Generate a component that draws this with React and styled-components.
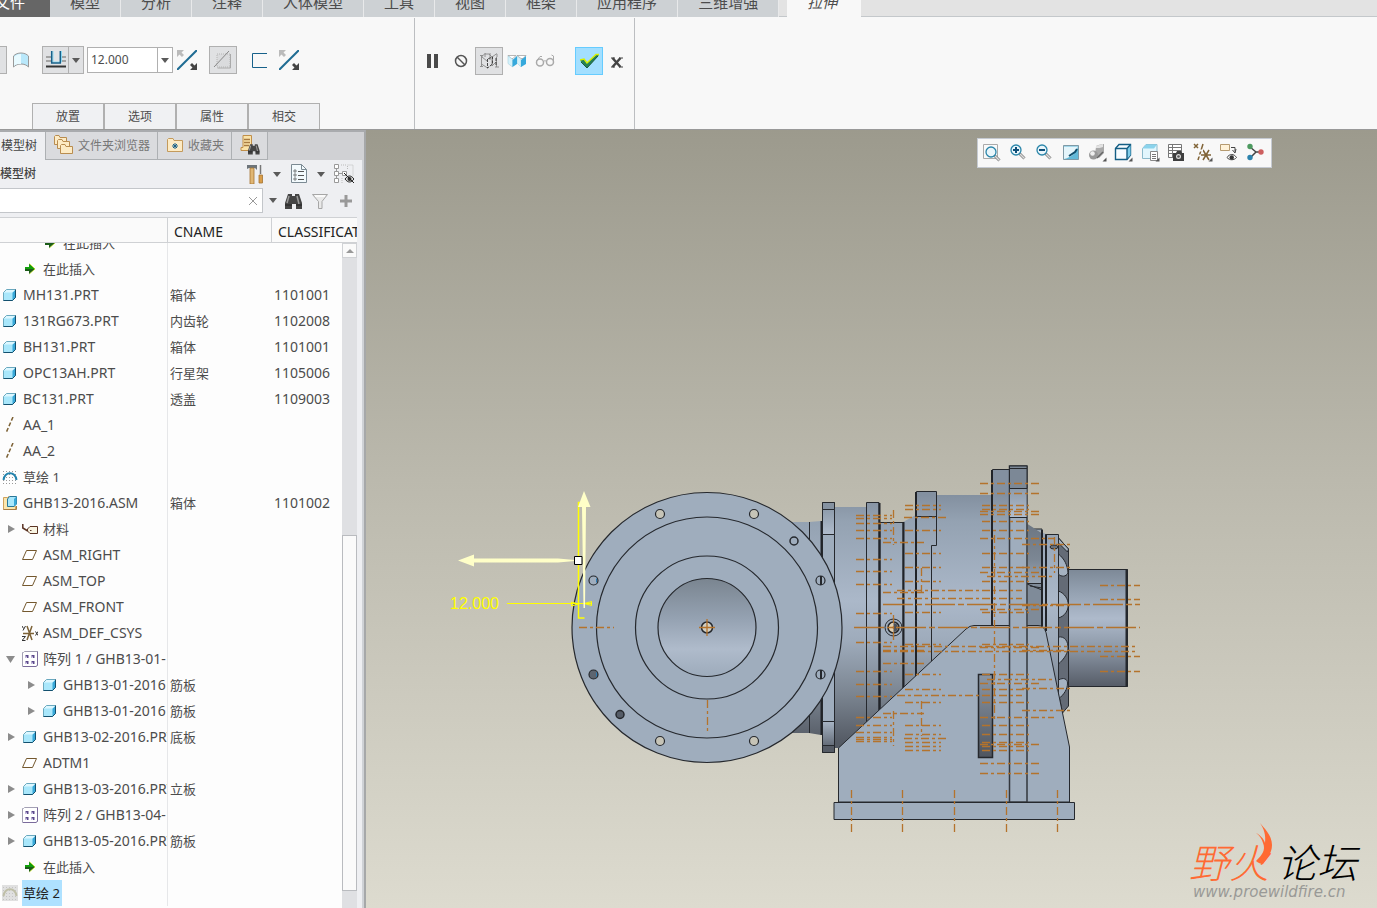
import React, { useLayoutEffect, useRef } from "react";
import styled, { createGlobalStyle, css } from "styled-components";

const GlobalStyle = createGlobalStyle`
  * {
    box-sizing: border-box;
  }
  body {
    margin: 0;
    font-family: "Noto Sans", "Noto Sans CJK SC", sans-serif;
    font-size: 12px;
    color: #4c4c4c;
    background: #f8f8f8;
  }
  button {
    font: inherit;
    color: inherit;
    padding: 0;
    border: 0;
    background: none;
  }
  svg {
    display: block;
    flex: none;
  }
`;

const ribbonTabs = [
  "模型",
  "分析",
  "注释",
  "人体模型",
  "工具",
  "视图",
  "框架",
  "应用程序",
  "三维增强",
];

const treeRows = [
  { depth: 2, icon: "insert", name: "在此插入" },
  { depth: 1, icon: "insert", name: "在此插入" },
  { depth: 0, icon: "part", name: "MH131.PRT", cname: "箱体", code: "1101001" },
  { depth: 0, icon: "part", name: "131RG673.PRT", cname: "内齿轮", code: "1102008" },
  { depth: 0, icon: "part", name: "BH131.PRT", cname: "箱体", code: "1101001" },
  { depth: 0, icon: "part", name: "OPC13AH.PRT", cname: "行星架", code: "1105006" },
  { depth: 0, icon: "part", name: "BC131.PRT", cname: "透盖", code: "1109003" },
  { depth: 0, icon: "axis", name: "AA_1" },
  { depth: 0, icon: "axis", name: "AA_2" },
  { depth: 0, icon: "sketch", name: "草绘 1" },
  { depth: 0, icon: "asm", name: "GHB13-2016.ASM", cname: "箱体", code: "1101002" },
  { depth: 1, icon: "material", name: "材料", arrow: "closed" },
  { depth: 1, icon: "plane", name: "ASM_RIGHT" },
  { depth: 1, icon: "plane", name: "ASM_TOP" },
  { depth: 1, icon: "plane", name: "ASM_FRONT" },
  { depth: 1, icon: "csys", name: "ASM_DEF_CSYS" },
  { depth: 1, icon: "pattern", name: "阵列 1 / GHB13-01-", arrow: "open" },
  { depth: 2, icon: "part", name: "GHB13-01-2016", cname: "筋板", arrow: "closed" },
  { depth: 2, icon: "part", name: "GHB13-01-2016", cname: "筋板", arrow: "closed" },
  { depth: 1, icon: "part", name: "GHB13-02-2016.PRT", cname: "底板", arrow: "closed" },
  { depth: 1, icon: "plane", name: "ADTM1" },
  { depth: 1, icon: "part", name: "GHB13-03-2016.PRT", cname: "立板", arrow: "closed" },
  { depth: 1, icon: "pattern", name: "阵列 2 / GHB13-04-", arrow: "closed" },
  { depth: 1, icon: "part", name: "GHB13-05-2016.PRT", cname: "筋板", arrow: "closed" },
  { depth: 1, icon: "insert", name: "在此插入" },
  { depth: 0, icon: "sketchOff", name: "草绘 2", selected: true },
];

/* ---------- icons ---------- */

const Icon = ({ size = 20, children }) => (
  <svg width={size} height={size} viewBox={`0 0 ${size} ${size}`} fill="none" aria-hidden="true">
    {children}
  </svg>
);

const Caret = () => (
  <svg width="8" height="5" viewBox="0 0 8 5" aria-hidden="true">
    <path d="M0 0h8L4 5z" fill="#5a5a5a" />
  </svg>
);

const SketchDots = ({ color }) => (
  <path
    d="M1 2.500h14M1 5.500h14M1 8.500h14M1 11.500h14M1 14.500h14"
    stroke={color}
    strokeDasharray="1 2"
  />
);

const rowIcons = {
  part: (
    <Icon size={16}>
      <path d="M1.500 5.500 4.500 2.500h9v7.500l-3 3.500h-9z" fill="#a9e7fb" />
      <path d="M10.500 5.500l3-3v8l-3 3z" fill="#38a8d8" />
      <path d="M1.500 5.500l3-3h9l-3 3z" fill="#dcf7ff" />
      <path d="M1.500 13.500V5.500l3-3h9v8l-3 3z" stroke="#6aa9bf" />
      <path d="M1.500 13.500h9l3-3v-8" stroke="#13506e" />
    </Icon>
  ),
  asm: (
    <Icon size={16}>
      <path d="M1.500 2.500h4l1-1v10h7v3h-12z" fill="#fbe6ae" stroke="#cfa25c" />
      <path d="M5.500 4l2-2.500h7V9l-2.500 2.500H5.500z" fill="#a9e7fb" stroke="#2a7697" />
      <path d="M12 4l2.500-2.500V9L12 11.500z" fill="#38a8d8" />
      <path d="M14.500 11v3.500h-13" stroke="#a87b42" />
    </Icon>
  ),
  axis: (
    <Icon size={16}>
      <path d="M11 0 4 16" stroke="#7d6236" strokeWidth="1.500" strokeDasharray="4 2" />
    </Icon>
  ),
  sketch: (
    <Icon size={16}>
      <SketchDots color="#999" />
      <path d="M1.500 11C3 2 13 2 14.500 11" stroke="#2283ad" strokeWidth="2" />
    </Icon>
  ),
  sketchOff: (
    <Icon size={16}>
      <path d="M0 0h16v16H0z" fill="#e0e0e0" />
      <SketchDots color="#c4c4c4" />
      <path d="M1.500 11C3 2 13 2 14.500 11" stroke="#bfbfa8" strokeWidth="2" />
    </Icon>
  ),
  insert: (
    <Icon size={16}>
      <path d="M3 6h4V3l6 5-6 5v-3H3z" fill="#1b5c18" />
      <path d="M3 6h4V3l6 5H3z" fill="#12a00c" />
      <path d="M7.500 2.500 13 8l-5.500 5" stroke="#c8e000" strokeWidth=".6" />
    </Icon>
  ),
  material: (
    <Icon size={16}>
      <path d="M5.500 8 8 5.500h7.500v7H8L5.500 10z" fill="#f8f4e2" stroke="#5b3424" />
      <path d="M.8 3v4l5 3" stroke="#5b3424" strokeWidth="1.500" />
      <path d="M8 9.500h1.500" stroke="#5b3424" />
    </Icon>
  ),
  plane: (
    <Icon size={16}>
      <path d="M4.500 3.500h10l-4 9h-10z" fill="#fff" stroke="#74582e" />
    </Icon>
  ),
  csys: (
    <Icon size={16}>
      <path d="M1 8.500h11M5 1l5 14M10 1 5 15" stroke="#7d6236" strokeWidth="1.500" />
      <path d="M0 1l1.500 2.500M3.500 1 1 5.500M0 11.500h3.500L0 15.500h3.500M13.500 6.500l2.500 4M16 6.500l-2.500 4" stroke="#333" />
    </Icon>
  ),
  pattern: (
    <Icon size={16}>
      <path d="M.5 1.500h1l1-1h13v14l-1 1H.5z" fill="#fff" stroke="#a3a0b4" />
      <path d="M15.500.5V14l-1.500 1.500H1" stroke="#7b6b9c" />
      <path d="M3.500 4h3v3h-3zM9.500 4h3v3h-3zM3.500 10h3v3h-3zM9.500 10h3v3h-3z" fill="#5c4a8c" />
      <path d="M3.500 5.500h1.500V7H3.500zM9.500 5.500H11V7H9.500zM3.500 11.500h1.500V13H3.500zM9.500 11.500H11V13H9.500z" fill="#d9d0f0" />
    </Icon>
  ),
};

const SurfaceIcon = () => (
  <Icon size={18}>
    <path d="M1.500 5C5 1 13 1 16.500 5v11C13 12 5 12 1.500 16z" fill="#b9e8fb" stroke="#999" />
    <path d="M2 6C4 4 6 3 9 3v10c-3 0-5 0-7 2z" fill="#e8faff" />
  </Icon>
);

const DepthIcon = () => (
  <Icon>
    <path d="M0 7h20M0 11h20" stroke="#a3a3a3" strokeWidth="2" />
    <path d="M5 0h10v13H5z" fill="#e3e4e6" />
    <path d="M7 1v11h8.500V1" stroke="#8fdcf3" />
    <path d="M5.700 1v12h8.600V1" stroke="#17618a" strokeWidth="1.500" />
    <path d="M0 16.500h20" stroke="#333" strokeWidth="2" />
  </Icon>
);

const FlipIcon = () => (
  <Icon>
    <path d="M0 20 20 0" stroke="#1f6c93" strokeWidth="2" />
    <path d="M0 0h7L4.500 2.500 7 5 5 7 2.500 4.500 0 7z" fill="#bbb" />
    <path d="M20 20h-7l2.500-2.500L13 15l2-2 2.500 2.500L20 13z" fill="#444" />
  </Icon>
);

const RemoveMaterialIcon = () => (
  <Icon>
    <path d="M4 4h13v13H4z" fill="#dadbdd" stroke="#b5b5b5" strokeDasharray="1 1" />
    <path d="M17.500 4v14H4.500" stroke="#aaa" />
    <path d="M1 17 16 1" stroke="#888" />
  </Icon>
);

const ThickenIcon = () => (
  <Icon>
    <path d="M18 3.500H3.500v14H18" stroke="#17618a" />
  </Icon>
);

const PauseIcon = () => (
  <Icon>
    <path d="M4 3h4v14H4zM11 3h4v14h-4z" fill="#4a4a4a" />
  </Icon>
);

const NoneIcon = () => (
  <Icon>
    <circle cx="10" cy="10" r="5.500" stroke="#555" strokeWidth="1.500" />
    <path d="m6 6 8 8" stroke="#555" strokeWidth="1.500" />
  </Icon>
);

const WireIcon = () => (
  <Icon>
    <path
      d="M1 4.500h3M1 15.500h3M2.500 5v10M2.500 6 6 2.500M6 3h4l3 3 5-3.500M6 2v4M11 2v7M18 3v3M2.500 13l6 4M13 6v9M13 15l4-4M17.500 6v10M16 16h4M3 6l5 4"
      stroke="#888"
      strokeWidth=".9"
    />
    <path d="M8.500 8v9l5-4V6zM17 7v7" stroke="#333" strokeWidth=".9" strokeDasharray="3 1" />
  </Icon>
);

const AttachedIcon = () => (
  <Icon>
    <path d="M1 4.500h8l-3 3H4zM10 4.500h9l-3 3h-2z" fill="#fff" stroke="#999" strokeWidth=".7" />
    <path d="M1 5 5.500 8v8L1 12.500zM10 5l4 3v8l-4-4z" fill="#d5f2fb" stroke="#9bc9d8" strokeWidth=".5" />
    <path d="M5.500 9 10 5v8l-4.500 3zM14 9l5-4v8l-5 3z" fill="#36a9dc" />
  </Icon>
);

const GlassesIcon = () => (
  <Icon>
    <circle cx="5" cy="11.500" r="3.500" stroke="#aaa" strokeWidth="1.500" />
    <circle cx="15" cy="11" r="3.500" stroke="#aaa" strokeWidth="1.500" />
    <path d="M8.500 10.500c1-1 2-1 3 0M1.500 10 5 5.500h2M18.500 11V5l-2-1" stroke="#aaa" />
  </Icon>
);

const CheckIcon = () => (
  <Icon>
    <path d="M1 9.500 5 8l3 4 9-8h3L8 17z" fill="#258256" />
    <path d="m1 9 4-1 3 4 9-8.500h3" stroke="#d8f000" strokeWidth="1.500" />
    <path d="m2 11 6 6L19 5" stroke="#1c5c3c" />
  </Icon>
);

const CloseIcon = () => (
  <Icon>
    <path d="m5.500 7 8 9M13.500 7l-8 9" stroke="#444" strokeWidth="2.500" />
    <path d="M4 7h4M12 7h4M4 16h4M12 16h4" stroke="#444" />
  </Icon>
);

const FoldersIcon = () => (
  <Icon>
    {[
      [0, 0],
      [3, 4],
      [6, 9],
    ].map(([x, y]) => (
      <path
        key={y}
        transform={`translate(${x} ${y})`}
        d="M.5 9.500v-8l1-1H5l1 2h6.500v7z"
        fill="#fdebc4"
        stroke="#b98d50"
      />
    ))}
  </Icon>
);

const FavoriteIcon = () => (
  <Icon size={18}>
    <path d="M1.500 15.500v-12l1-1H7l1 2h8.500v11z" fill="#fdebc4" stroke="#c39a5c" />
    <path d="M9 7v6M6 10h6M7 8l4 4M11 8l-4 4" stroke="#17618a" />
  </Icon>
);

const Binoculars = ({ x = 0, y = 0, scale = 1 }) => (
  <g transform={`translate(${x} ${y}) scale(${scale})`}>
    <path d="M3 2h4v2h3V2h4l3 9v6h-6v-5H7v5H0v-6z" fill="#454545" />
    <path d="M4 4 2 11M12 4l2 8" stroke="#9a9a9a" strokeWidth="1.500" />
    <path d="M0 13h7M11 13h6" stroke="#222" />
  </g>
);

const SearchTabIcon = () => (
  <Icon>
    <path d="M3 .5h8.500v15H1v-3h2z" fill="#fbe3a8" stroke="#c08f4a" />
    <path d="M4 4.500h6M4 7.500h6M4 10.500h5" stroke="#a87b42" strokeWidth="1.500" />
    <Binoculars x={8} y={8} scale={0.68} />
  </Icon>
);

const ToolsIcon = () => (
  <Icon>
    <path d="M2 1h10v5l-2-2H4L2 5z" fill="#6d747a" />
    <path d="M5 4h4v16H5z" fill="#e0b674" stroke="#a47433" strokeWidth=".8" />
    <path d="M15.500 1v9" stroke="#777" strokeWidth="1.500" />
    <path d="M14 11h3.500v8H14z" fill="#d99d48" stroke="#a47433" strokeWidth=".8" />
  </Icon>
);

const SettingsDocIcon = () => (
  <Icon>
    <path d="M2.500.5h10l5 5v13h-15z" fill="#f3fafd" stroke="#7b8a93" />
    <path d="M12.500.5v5h5" stroke="#7b8a93" />
    <path d="M5 6h2v2H5zM5 10h2v2H5zM5 14h2v2H5z" stroke="#555" strokeWidth=".7" />
    <path d="M9 7.500h6M9 11.500h6M9 15.500h6" stroke="#555" />
  </Icon>
);

const HideTreeIcon = () => (
  <Icon>
    <path d="M.5.5h4v4h-4zM.5 7.500h4v4h-4zM.5 14.500h4v4h-4zM8.500 7.500h4v4h-4z" fill="#fff" stroke="#999" />
    <path d="M2.500 4.500v3M2.500 11.500v3M4.500 9.500h4" stroke="#999" />
    <path d="M7 1h5M13.500 1h5.500v11M13.500 2v4M8 14v5" stroke="#bbb" strokeDasharray="1 1" />
    <path d="M11 15c3-4 6-4 9 0-3 4-6 4-9 0z" fill="#ddd" stroke="#222" />
    <circle cx="15.500" cy="15" r="2" fill="#333" />
    <path d="m10 9 10 10" stroke="#222" />
  </Icon>
);

const BinocularsIcon = () => (
  <Icon size={18}>
    <Binoculars />
  </Icon>
);

const FunnelIcon = () => (
  <Icon size={18}>
    <path d="M1.500 2.500h15L11 9.500v7H7.500v-7z" fill="#e9e9e9" stroke="#a6a6a6" />
    <path d="M4 4h10" stroke="#fff" strokeWidth="1.500" />
  </Icon>
);

const PlusIcon = () => (
  <Icon size={18}>
    <path d="M9 3v12M3 9h12" stroke="#999" strokeWidth="3" />
  </Icon>
);

const Magnifier = ({ x = 0, y = 0, sign }) => (
  <g transform={`translate(${x} ${y})`}>
    <path d="m10.500 10.500 5 5" stroke="#888" strokeWidth="3" />
    <path d="m11 11 4.500 4.500" stroke="#ddd" strokeWidth="1.200" />
    <circle cx="7" cy="7" r="5" fill="#eaf6fb" stroke="#2b86aa" strokeWidth="1.300" />
    {sign && <path d={sign} stroke="#0f4f78" strokeWidth="2" />}
  </g>
);

const Flyout = () => <path d="M19.500 15.500v4h-4z" fill="#555" />;

const viewIcons = [
  {
    label: "重新调整",
    art: (
      <>
        <path d="M2.500 2.500h14v14h-14z" fill="#fafafa" stroke="#aaa" />
        <Magnifier x={3} y={3} />
      </>
    ),
  },
  { label: "放大", art: <Magnifier x={1} y={1} sign="M4 7h6M7 4v6" /> },
  { label: "缩小", art: <Magnifier x={1} y={1} sign="M4 7h6" /> },
  {
    label: "重画",
    art: (
      <>
        <path d="M2.500 3.500h15v14h-15z" fill="#62b9d8" stroke="#7f9aa6" />
        <path d="M3 4.500h14C15 11 11 15 3 17z" fill="#e4f5fb" />
        <path d="m8 14 6-4 2-3" stroke="#114f6d" strokeWidth="2" />
      </>
    ),
  },
  {
    label: "显示样式",
    art: (
      <>
        <path d="M9 5c0-2 3-2 8-3v9l-5 5-4-4z" fill="#a9a9a9" />
        <path d="M9 4c2-1 5-1 7-2v3c-2 1-5 1-7 1z" fill="#e2e2e2" />
        <circle cx="6.500" cy="13" r="4.500" fill="#999" />
        <circle cx="5.500" cy="11.500" r="2.300" fill="#efefef" />
        <path d="m10 16 6-6" stroke="#666" strokeWidth="1.500" />
        <Flyout />
      </>
    ),
  },
  {
    label: "已保存方向",
    art: (
      <>
        <path d="M2.500 6.500 6 2.500h11.500V13L14 17.500H2.500z" fill="#f7fcff" stroke="#145e84" strokeWidth="1.400" />
        <path d="M14 6.500 17.500 3v10L14 17z" fill="#7fcdea" />
        <path d="M2.500 6.500H14v11M14 6.500l3.500-4" stroke="#145e84" strokeWidth="1.400" />
        <Flyout />
      </>
    ),
  },
  {
    label: "视图管理器",
    art: (
      <>
        <path d="M2.500 6.500 6 2.500h11v9l-3 5H2.500z" fill="#e2f6fd" stroke="#8cbacb" />
        <path d="M2.500 6.500 6 2.500h11l-3 4z" fill="#8ad3ec" />
        <path d="M10.500 9.500h7v9h-7z" fill="#fff" stroke="#888" />
        <path d="M12 12.500h4M12 14.500h4M12 16.500h4" stroke="#777" />
        <Flyout />
      </>
    ),
  },
  {
    label: "图像",
    art: (
      <>
        <path d="M2.500 2.500h13v13h-13z" fill="#fff" stroke="#777" />
        <path d="M2.500 5.500h13M2.500 8.500h13M2.500 11.500h13M6.500 2.500v13" stroke="#777" />
        <path d="M7 11h3l1-2h4l1 2h2v8H7z" fill="#3e3e3e" />
        <circle cx="12.500" cy="14.500" r="2.500" fill="#ddd" />
        <circle cx="12.500" cy="14.500" r="1.300" fill="#555" />
      </>
    ),
  },
  {
    label: "基准显示",
    art: (
      <>
        <path d="m1 2 4 4M5 2 1 6M10 2 5 18" stroke="#806336" strokeWidth="1.500" />
        <path d="M8 13h10M10 8l6 10M16 8l-6 10" stroke="#806336" strokeWidth="1.500" />
        <path d="M6 8.500h4M5 13.500h3" stroke="#f8f8f8" strokeWidth="2" />
        <Flyout />
      </>
    ),
  },
  {
    label: "注释显示",
    art: (
      <>
        <path d="M1.500 2.500h9v6h-9z" fill="#fff2d8" stroke="#b59a70" />
        <path d="M12 5.500h4v4M13.500 8l2.500 3 1-4" stroke="#444" />
        <path d="M8 15.500c2.500-4 7-4 9.500 0-2.500 3-7 3-9.500 0z" fill="#fff" stroke="#444" />
        <circle cx="12.700" cy="15.500" r="2.200" fill="#333" />
      </>
    ),
  },
  {
    label: "旋转中心",
    art: (
      <>
        <path d="m4 5 6 5M4 16l6-6h6" stroke="#444" strokeWidth="1.500" />
        <circle cx="4" cy="4.500" r="2.700" fill="#4d9a60" />
        <circle cx="4" cy="15.500" r="2.700" fill="#2c83ad" />
        <circle cx="15" cy="10" r="2.700" fill="#cd5f5f" />
      </>
    ),
  },
];

/* ---------- model drawing ---------- */

// horizontal centre lines: [x1, x2, [y...]]
const centreRows = [
  [856, 892, [515, 518, 523, 530, 538, 559, 571, 584, 613, 642, 671, 684, 696, 717, 725, 732, 737, 739, 741]],
  [905, 941, [505, 509, 530, 553, 567, 581, 612, 644, 674, 689, 702, 725, 734, 742, 746, 750]],
  [904, 948, [517, 738]],
  [982, 1029, [505, 509, 521, 530, 553, 567, 581, 612, 644, 674, 689, 702, 725, 734, 742, 746, 750]],
  [980, 1039, [483, 493, 511, 514, 572, 609, 647, 683, 744, 763, 773]],
  [980, 1054, [538, 717]],
  [987, 1054, [576, 679]],
  [897, 1022, [590, 598, 695]],
  [883, 1138, [646, 651]],
  [883, 924, [542, 592, 650, 663, 713]],
  [1022, 1071, [544, 567, 605, 650, 688, 710]],
  [1100, 1140, [585, 599, 656, 671]],
];

// vertical centre lines: [x, y1, y2]
const centreColumns = [
  [893, 510, 545],
  [893, 615, 640],
  [893, 711, 746],
  [921, 568, 592],
  [921, 701, 736],
  [994, 535, 720],
  [1054, 537, 573],
  [851, 790, 832],
  [902, 790, 832],
  [954, 790, 832],
  [1006, 790, 832],
  [1057, 790, 832],
  [707, 700, 734],
];

const openHoles = [
  [660, 514],
  [754, 514],
  [660, 741],
  [754, 741],
];

const ModelDrawing = () => (
  <Canvas viewBox="366 130 1011 778" role="img" aria-label="GHB13-2016">
    <defs>
      <linearGradient id="barrel" gradientUnits="userSpaceOnUse" x1="0" y1="495" x2="0" y2="760">
        <stop offset="0" stopColor="#8390a0" />
        <stop offset="0.1" stopColor="#94a2b2" />
        <stop offset="0.4" stopColor="#abb8c9" />
        <stop offset="0.55" stopColor="#9eabbb" />
        <stop offset="0.75" stopColor="#7b8591" />
        <stop offset="0.93" stopColor="#555b65" />
        <stop offset="1" stopColor="#50565f" />
      </linearGradient>
      <linearGradient id="shaft" x1="0" y1="0" x2="0" y2="1">
        <stop offset="0" stopColor="#7d8997" />
        <stop offset="0.2" stopColor="#95a2b2" />
        <stop offset="0.42" stopColor="#aebacb" />
        <stop offset="0.65" stopColor="#8f9baa" />
        <stop offset="1" stopColor="#565c67" />
      </linearGradient>
      <linearGradient id="bore" x1="0" y1="0" x2="0" y2="1">
        <stop offset="0" stopColor="#7a8590" />
        <stop offset="0.4" stopColor="#94a1b1" />
        <stop offset="0.72" stopColor="#afbbcb" />
        <stop offset="1" stopColor="#9dabbb" />
      </linearGradient>
      <linearGradient id="cap" x1="0" y1="0" x2="0" y2="1">
        <stop offset="0" stopColor="#8e9cac" />
        <stop offset="1" stopColor="#b0bccc" />
      </linearGradient>
      <linearGradient id="capLow" x1="0" y1="0" x2="0" y2="1">
        <stop offset="0" stopColor="#a8b5c5" />
        <stop offset="1" stopColor="#646c78" />
      </linearGradient>
      <linearGradient id="slot" x1="0" y1="0" x2="0" y2="1">
        <stop offset="0" stopColor="#8a96a5" />
        <stop offset="1" stopColor="#4f555f" />
      </linearGradient>
      <linearGradient id="step" x1="0" y1="0" x2="0" y2="1">
        <stop offset="0" stopColor="#6c7682" />
        <stop offset="0.6" stopColor="#7c8794" />
        <stop offset="1" stopColor="#99a6b5" />
      </linearGradient>
    </defs>

    {/* gearbox barrel, left to right */}
    <g fill="url(#barrel)" stroke="#25282d">
      <path d="M790 522h19l12-1v214l-12-2h-19z" stroke="none" />
      <path d="M809.500 522v211" />
      <path d="M834.500 507h32v241h-32z" stroke="none" />
      <path d="M866.500 502.500h12.500V752h-12.500z" />
      <path d="M880 522.500h23V752h-23z" />
      <path d="M903 522l13-7v237h-13z" stroke="none" />
      <path d="M930 495h62v257h-62z" stroke="none" />
      <path d="M916.500 491.500h20v54h-5V752h-15z" />
      <path d="M916.500 516.500h20" />
      <path d="M992.500 469.500h17V752h-17z" />
      <path d="M1034 529h8v110h4V534" />
      <path d="M1027.500 524l14 9v50h-14z" fill="url(#step)" stroke="none" />
      <path d="M1027.500 584h14v50h-14z" fill="#7f8b99" stroke="none" />
      <path d="M1027 583.500h15M1027 584l15 6M1030 586l12 2" />
      <path d="M1045.500 534.500h13V690h-13z" />
      <path d="M1058.500 538l10 11v157l-6 7-4-20z" fill="#646b76" />
    </g>
    <g stroke="#202328" strokeWidth="2" fill="none">
      <path d="M821.500 521v214M879.500 503v245M903.500 522v180M916 492v195M992 470v156M1042 530v96M1046 535v96" />
    </g>
    <path d="M1058.500 538l10 11-1 3-9-9z" fill="#a3b0bf" stroke="#25282d" />
    <g fill="#a5b2c1" stroke="#25282d">
      <path d="M1058.500 554c6 5 9 11 9.500 19-2 4-7 4-9.500 1z" />
      <path d="M1058.500 591c13 5 13 23 0 27z" />
      <path d="M1058.500 637c6-1 10 4 9.500 12-1 6-5 11-9.500 15z" />
      <path d="M1058.500 680c5-3 9-1 9 3 0 6-3 11-9 16z" />
    </g>
    <ellipse cx="1054" cy="547" rx="4" ry="2" fill="#69717d" stroke="#25282d" />
    <path d="M1068.500 569.500h59v117h-59z" fill="url(#shaft)" stroke="#25282d" />
    <path d="M1126.500 569v118" stroke="#25282d" strokeWidth="2" />

    {/* front flange rim */}
    <g stroke="#25282d">
      <path d="M822.500 502.500h12v250h-12z" fill="#9fadbd" />
      <path d="M822.500 502.500h12v7h-12z" fill="#8592a1" />
      <path d="M822.500 509.500h12v25h-12z" fill="url(#cap)" />
      <path d="M822.500 721.500h12v24h-12z" fill="url(#capLow)" />
      <path d="M822.500 745.500h12v7h-12z" fill="#555b65" />
    </g>

    {/* support bracket */}
    <path
      d="M838.500 802v-54L966 629q4-3.500 8-3.500h64q6 0 8 7L1069.500 747v55z"
      fill="#9fadbd"
      stroke="#25282d"
    />
    <path d="M978.500 674.500h14v83h-14z" fill="url(#slot)" stroke="#25282d" strokeWidth="1.500" />
    <path d="M1009.500 466h17.500v336h-17.500z" fill="#9fadbd" stroke="#33373d" strokeWidth="1.500" />
    <path d="M1009.500 466h17.500v22.500h-17.500z" fill="#7c8896" stroke="#25282d" />
    <path d="M1010 489h16.500v28H1010z" fill="url(#cap)" />
    <path d="M1009 468.500h18M1009 517.500h18" stroke="#25282d" />
    <path d="M834 802.500h240.500v17H834z" fill="#9fadbd" stroke="#25282d" />

    {/* oil port */}
    <circle cx="893.500" cy="627.500" r="8.500" fill="#9fadbd" stroke="#25282d" />
    <circle cx="893.500" cy="627.500" r="5.500" fill="#e3cfae" stroke="#25282d" strokeWidth="1.500" />
    <path d="M893.500 623a4.500 4.500 0 0 1 0 9z" fill="#4c525c" />

    {/* input flange */}
    <g fill="#9fadbd" stroke="#25282d" strokeWidth="1.200">
      <circle cx="707" cy="627.500" r="135" />
      <circle cx="707" cy="627.500" r="110.500" />
      <circle cx="707" cy="627.500" r="71.500" />
      <circle cx="707" cy="627.500" r="49" fill="url(#bore)" />
      <circle cx="794" cy="541" r="4" strokeWidth="1.500" />
      <circle cx="620" cy="714.500" r="4" fill="#555c67" strokeWidth="1.500" />
      <circle cx="593.500" cy="580.500" r="4.500" />
      <circle cx="593.500" cy="674.500" r="4.500" fill="#5d6570" />
      <circle cx="820.500" cy="580.500" r="4.500" />
      <circle cx="820.500" cy="674.500" r="4.500" />
      <path d="M821 576v9M821 670v9" strokeWidth="2" />
    </g>
    <path d="M596.500 578.500v4M596.500 672.500v4" stroke="#2b7cb5" />
    {openHoles.map(([x, y]) => (
      <circle key={`${x}-${y}`} cx={x} cy={y} r="4.500" fill="#c6c4b7" stroke="#25282d" strokeWidth="1.200" />
    ))}
    <circle cx="707" cy="627.500" r="5.500" fill="#d0cec2" stroke="#25282d" strokeWidth="1.500" />

    {/* centre lines */}
    <g stroke="#b4732c" strokeWidth="1.300" strokeDasharray="8 3 3 3">
      {centreRows.map(([x1, x2, ys]) =>
        ys.map((y) => <path key={`${x1}-${x2}-${y}`} d={`M${x1} ${y}.5H${x2}`} />)
      )}
      {centreColumns.map(([x, y1, y2]) => (
        <path key={`${x}-${y1}`} d={`M${x}.5 ${y1}V${y2}`} />
      ))}
      <path d="M579 627.500h35" />
      <path d="M883 604.500h257M854 627.500h286" strokeDasharray="30 3 6 3" />
      <path d="M699 627.500h16M707 619v17" strokeDasharray="none" />
    </g>

    {/* extrude preview and drag handles */}
    <g stroke="#ffff00" fill="none">
      <path d="M584 502.500h-5.500V618h6" strokeWidth="1.500" />
      <path d="M507 603.500h84M571.500 602v4l7-2zM591.500 601.500v4l-7-2z" />
    </g>
    <g fill="#ffffc8">
      <path d="M458 560.500 474 554.500v4h84l17 1.500v1l-17 1.500h-84v4z" />
      <path d="M584 491l6.500 16H586l-1 101h-1.500L582 507h-4z" />
    </g>
    <path d="M574.500 556.500h7.500v8h-7.500z" fill="#fff" stroke="#000" />
    <DimensionText x="450" y="609">
      12.000
    </DimensionText>
  </Canvas>
);

/* ---------- page ---------- */

const ModelTree = () => {
  const scroller = useRef(null);

  useLayoutEffect(() => {
    scroller.current.scrollTop = 13;
  }, []);

  return (
    <TreeFrame>
      <TreeScroll ref={scroller}>
        <TreeTable>
          <colgroup>
            <col width="168" />
            <col width="104" />
            <col />
          </colgroup>
          <thead>
            <tr>
              <th aria-label="模型树" />
              <th>CNAME</th>
              <th>CLASSIFICATION</th>
            </tr>
          </thead>
          <tbody>
            {treeRows.map((row, index) => (
              <tr key={index}>
                <td>
                  <Node $depth={row.depth}>
                    {row.depth > 0 && (
                      <Expander>
                        {row.arrow && (
                          <svg width="10" height="10" viewBox="0 0 10 10" aria-hidden="true">
                            <path d={row.arrow === "open" ? "M0 2h9L4.500 9z" : "M2 1l7 4-7 4z"} fill="#8c8c8c" />
                          </svg>
                        )}
                      </Expander>
                    )}
                    {rowIcons[row.icon]}
                    <NodeName $cjk={/^[\u4e00-\u9fff]+( \d)?$/.test(row.name)} $selected={row.selected}>
                      {row.name}
                    </NodeName>
                  </Node>
                </td>
                <td>{row.cname}</td>
                <td>{row.code}</td>
              </tr>
            ))}
          </tbody>
        </TreeTable>
      </TreeScroll>
      <ScrollBar aria-hidden="true">
        <ScrollUp>
          <svg width="8" height="4" viewBox="0 0 8 4">
            <path d="M0 4h8L4 0z" fill="#999" />
          </svg>
        </ScrollUp>
        <ScrollGap $grow={278} />
        <ScrollThumb />
        <ScrollGap $grow={17} />
      </ScrollBar>
    </TreeFrame>
  );
};

const App = () => {
  return (
    <>
      <GlobalStyle />
      <Page>
        <RibbonTabs>
          <RibbonTab $kind="file">文件</RibbonTab>
          {ribbonTabs.map((name) => (
            <RibbonTab key={name}>{name}</RibbonTab>
          ))}
          <RibbonTab $kind="active">拉伸</RibbonTab>
        </RibbonTabs>

        <Ribbon>
          <RibbonGroup $width={415} $toolsHeight={84}>
            <Tools $gap={12}>
              <Tools $gap={5}>
                <CutButton aria-label="实体" />
                <ToolButton $width={18} aria-label="曲面">
                  <SurfaceIcon />
                </ToolButton>
              </Tools>
              <Tools $gap={3}>
                <SplitButton>
                  <ToolButton $width={26} aria-label="深度">
                    <DepthIcon />
                  </ToolButton>
                  <CaretButton aria-label="深度选项">
                    <Caret />
                  </CaretButton>
                </SplitButton>
                <ValueBox>
                  <input aria-label="深度值" defaultValue="12.000" />
                  <CaretButton aria-label="最近的值">
                    <Caret />
                  </CaretButton>
                </ValueBox>
                <ToolButton $width={21} aria-label="反向">
                  <FlipIcon />
                </ToolButton>
              </Tools>
              <ToolButton $pressed aria-label="移除材料">
                <RemoveMaterialIcon />
              </ToolButton>
              <Tools $gap={9}>
                <ToolButton $width={20} aria-label="加厚草绘">
                  <ThickenIcon />
                </ToolButton>
                <ToolButton $width={21} aria-label="材料方向">
                  <FlipIcon />
                </ToolButton>
              </Tools>
            </Tools>
            <PanelTabs>
              <button>放置</button>
              <button>选项</button>
              <button>属性</button>
              <button>相交</button>
            </PanelTabs>
          </RibbonGroup>

          <RibbonGroup $width={220} $toolsHeight={86}>
            <Tools $gap={16} $inset>
              <Tools $gap={0}>
                <ToolButton aria-label="暂停">
                  <PauseIcon />
                </ToolButton>
                <ToolButton aria-label="无预览">
                  <NoneIcon />
                </ToolButton>
                <ToolButton $pressed aria-label="分离">
                  <WireIcon />
                </ToolButton>
                <ToolButton aria-label="连接">
                  <AttachedIcon />
                </ToolButton>
                <ToolButton aria-label="特征预览">
                  <GlassesIcon />
                </ToolButton>
              </Tools>
              <Tools $gap={0}>
                <ToolButton $accept aria-label="确定">
                  <CheckIcon />
                </ToolButton>
                <ToolButton aria-label="取消">
                  <CloseIcon />
                </ToolButton>
              </Tools>
            </Tools>
          </RibbonGroup>
        </Ribbon>

        <Workspace>
          <Sidebar>
            <SideTabs>
              <SideTab $active>模型树</SideTab>
              <SideTab>
                <FoldersIcon />
                文件夹浏览器
              </SideTab>
              <SideTab>
                <FavoriteIcon />
                收藏夹
              </SideTab>
              <SideTab aria-label="搜索">
                <SearchTabIcon />
              </SideTab>
            </SideTabs>

            <SideBody>
              <TitleRow>
                <strong>模型树</strong>
                <button aria-label="设置">
                  <ToolsIcon />
                </button>
                <button aria-label="设置选项">
                  <Caret />
                </button>
                <button aria-label="显示">
                  <SettingsDocIcon />
                </button>
                <button aria-label="显示选项">
                  <Caret />
                </button>
                <button aria-label="隐藏树列">
                  <HideTreeIcon />
                </button>
              </TitleRow>
              <SearchRow>
                <SearchBox>
                  <input aria-label="搜索模型树" />
                  <button aria-label="清除">
                    <Icon size={10}>
                      <path d="m1 1 8 8M9 1 1 9" stroke="#999" />
                    </Icon>
                  </button>
                </SearchBox>
                <button aria-label="搜索选项">
                  <Caret />
                </button>
                <button aria-label="查找">
                  <BinocularsIcon />
                </button>
                <button aria-label="过滤">
                  <FunnelIcon />
                </button>
                <button aria-label="添加">
                  <PlusIcon />
                </button>
              </SearchRow>
              <ModelTree />
            </SideBody>
          </Sidebar>

          <Viewport>
            <ModelDrawing />
            <ViewToolbar>
              {viewIcons.map(({ label, art }) => (
                <button key={label} aria-label={label}>
                  <Icon>{art}</Icon>
                </button>
              ))}
            </ViewToolbar>
            <Watermark>
              <WatermarkTitle>
                <span>野火</span>
                <span>论坛</span>
              </WatermarkTitle>
              <WatermarkUrl>www.proewildfire.cn</WatermarkUrl>
              <Flame viewBox="0 0 18 42" aria-hidden="true">
                <path
                  d="M5 0c4 5 12 12 12 22 0 9-6 14-9 19-2 0-5-1-7-3 6-6 10-11 7-18C7 16 4 12 1 10c4 2 8 6 9 10 1-8-1-14-5-20z"
                  fill="#ff6a33"
                />
              </Flame>
            </Watermark>
          </Viewport>
        </Workspace>
      </Page>
    </>
  );
};

const Page = styled.div`
  display: flex;
  flex-direction: column;
  height: 100vh;
  overflow: hidden;
`;

const RibbonTabs = styled.nav`
  display: flex;
  flex: none;
  align-items: flex-end;
  height: 17px;
  overflow: hidden;
  background: #e3e3e3;
  box-shadow: inset 0 -1px #c4c8cb;
`;

const RibbonTab = styled.button`
  flex: none;
  height: 28px;
  padding: 0 20px 1px;
  border-right: 1px solid #e8e9ea;
  background: #cdd1d4;
  font-size: 15px;
  line-height: 27px;
  ${({ $kind }) =>
    $kind === "file" &&
    css`
      display: flex;
      justify-content: flex-end;
      width: 50px;
      padding: 0 25px 1px 0;
      border: 0;
      background: #666;
      color: #fff;
      white-space: nowrap;
    `}
  ${({ $kind }) =>
    $kind === "active" &&
    css`
      margin-left: 8px;
      padding: 0 24px 1px 20px;
      border: 0;
      background: #f8f8f8;
      font-style: italic;
    `}
`;

const Ribbon = styled.header`
  display: flex;
  flex: none;
  height: 113px;
  border-bottom: 1px solid #999;
  background: #f8f8f8;
`;

const RibbonGroup = styled.div`
  display: flex;
  flex-direction: column;
  justify-content: space-between;
  min-width: ${({ $width }) => $width}px;
  margin-top: 1px;
  border-right: 1px solid #bcbec1;
  > div:first-child {
    height: ${({ $toolsHeight }) => $toolsHeight}px;
  }
`;

const Tools = styled.div`
  display: flex;
  align-items: center;
  gap: ${({ $gap }) => $gap}px;
  padding-left: ${({ $inset }) => ($inset ? "4px" : 0)};
`;

const ToolButton = styled.button`
  display: flex;
  align-items: center;
  justify-content: center;
  width: ${({ $width = 28 }) => $width}px;
  height: 28px;
  ${({ $pressed }) =>
    $pressed &&
    css`
      border: 1px solid #b0b0b0;
      background: #e0e1e3;
    `}
  ${({ $accept }) =>
    $accept &&
    css`
      border: 1px solid #66ccff;
      background: #a3dfff;
    `}
`;

const CutButton = styled.button`
  width: 7px;
  height: 28px;
  border: 1px solid #b0b0b0;
  border-left: 0;
  background: #e0e1e3;
`;

const CaretButton = styled.button`
  display: flex;
  align-items: center;
  justify-content: center;
  align-self: stretch;
  width: 15px;
  border-left: 1px solid #b0b0b0;
`;

const SplitButton = styled.div`
  display: flex;
  align-items: center;
  width: 42px;
  height: 28px;
  border: 1px solid #b0b0b0;
  background: #e0e1e3;
`;

const ValueBox = styled.div`
  display: flex;
  width: 86px;
  height: 26px;
  border: 1px solid #b0b0b0;
  background: #fff;
  input {
    flex: 1;
    min-width: 0;
    padding: 0 3px 2px;
    border: 0;
    background: none;
    color: #4c4c4c;
    font-family: inherit;
    font-size: 12px;
  }
`;

const PanelTabs = styled.div`
  display: flex;
  height: 26px;
  padding-left: 32px;
  button {
    width: 72px;
    padding-bottom: 1px;
    border: 1px solid #b0b0b0;
    border-bottom: 0;
    background: #f0f1f3;
    font-size: 12px;
  }
`;

const Workspace = styled.main`
  display: flex;
  flex: 1;
  min-height: 0;
`;

const Sidebar = styled.aside`
  display: flex;
  flex-direction: column;
  flex: none;
  width: 366px;
  border-top: 2px solid #a9abae;
  border-right: 2px solid #a6a8a9;
  background: #d0d1d4;
`;

const SideTabs = styled.div`
  display: flex;
  height: 28px;
`;

const SideTab = styled.button`
  display: flex;
  align-items: center;
  gap: 4px;
  padding: 0 7px 2px 8px;
  border: 1px solid #adb0b3;
  border-left: 0;
  border-top: 0;
  background: #dadbde;
  color: #777;
  font-size: 12px;
  white-space: nowrap;
  ${({ $active }) =>
    $active &&
    css`
      padding: 0 8px 3px 1px;
      border-bottom: 0;
      background: #eeeff2;
      color: #444;
    `}
`;

const SideBody = styled.div`
  display: flex;
  flex-direction: column;
  flex: 1;
  min-height: 0;
  padding-right: 5px;
  border-right: 2px solid #cfd2d6;
  background: #eeeff2;
`;

const TitleRow = styled.div`
  display: flex;
  align-items: center;
  gap: 8px;
  height: 28px;
  padding-right: 3px;
  strong {
    flex: 1;
    padding-bottom: 2px;
    color: #444;
    font-weight: 500;
  }
  button:nth-of-type(1),
  button:nth-of-type(5) {
    margin-left: 1px;
  }
`;

const SearchRow = styled.div`
  display: flex;
  align-items: center;
  gap: 8px;
  height: 25px;
  padding-right: 2px;
  > button:first-of-type {
    margin-left: -2px;
  }
`;

const SearchBox = styled.div`
  display: flex;
  flex: 1;
  align-items: center;
  height: 25px;
  padding-right: 4px;
  border: 1px solid #c3c6ca;
  border-left: 0;
  background: #fff;
  input {
    flex: 1;
    min-width: 0;
    border: 0;
    background: none;
  }
`;

const TreeFrame = styled.div`
  position: relative;
  flex: 1;
  min-height: 0;
  margin-top: 4px;
`;

const TreeScroll = styled.div`
  height: 100%;
  overflow: hidden;
  background: #fdfdfd;
`;

const TreeTable = styled.table`
  width: 100%;
  margin-bottom: 8px;
  border-collapse: separate;
  border-spacing: 0;
  table-layout: fixed;
  font-size: 14px;
  th,
  td {
    padding: 0;
    overflow: hidden;
    text-align: left;
    white-space: nowrap;
  }
  th {
    position: sticky;
    top: 0;
    height: 26px;
    padding: 4px 0 0 6px;
    border: 1px solid #cfd1d4;
    border-left: 0;
    background: #fafafa;
    color: #222;
    font-weight: 400;
    line-height: 20px;
  }
  th:last-child {
    border-right: 0;
  }
  td {
    height: 26px;
    padding-left: 2px;
    line-height: 26px;
  }
  td:first-child {
    padding-left: 0;
    border-right: 1px solid #e6e7e9;
  }
  td:nth-child(2) {
    font-size: 13px;
    line-height: 24px;
  }
`;

const Node = styled.div`
  display: flex;
  align-items: center;
  gap: 4px;
  height: 26px;
  padding-left: ${({ $depth }) => ($depth > 1 ? 22 : 2)}px;
`;

const Expander = styled.span`
  display: flex;
  flex: none;
  width: 16px;
  padding-left: 4px;
`;

const NodeName = styled.span`
  flex: none;
  padding: 0 2px 0 1px;
  font-size: ${({ $cjk }) => ($cjk ? "13px" : "14px")};
  ${({ $selected }) =>
    $selected &&
    css`
      background: #aee1ff;
      color: #222;
    `}
`;

const ScrollBar = styled.div`
  position: absolute;
  top: 26px;
  right: 0;
  bottom: 0;
  display: flex;
  flex-direction: column;
  width: 15px;
  background: #dfe0e3;
`;

const ScrollUp = styled.div`
  display: flex;
  align-items: center;
  justify-content: center;
  height: 15px;
  border: 1px solid #d0d2d5;
  background: #fafafa;
`;

const ScrollGap = styled.div`
  flex: ${({ $grow }) => $grow};
`;

const ScrollThumb = styled.div`
  flex: 356;
  border: 1px solid #b9bbbf;
  background: #fafafa;
`;

const Viewport = styled.section`
  position: relative;
  flex: 1;
  min-width: 0;
  background: linear-gradient(#9c9a8d, #bbb9ad 45%, #dddbcf);
`;

const Canvas = styled.svg`
  width: 100%;
  height: 100%;
`;

const DimensionText = styled.text`
  fill: #ffff00;
  font-family: "Liberation Sans", sans-serif;
  font-size: 16px;
`;

const ViewToolbar = styled.div`
  position: absolute;
  top: 8px;
  right: 105px;
  display: grid;
  grid-template-columns: repeat(11, 1fr);
  width: 295px;
  height: 30px;
  padding: 0 2px 2px 0;
  border: 1px solid #c5cad2;
  background: #f8f8f8;
  button {
    display: flex;
    align-items: center;
    justify-content: center;
  }
`;

const Watermark = styled.div`
  position: absolute;
  right: 20px;
  bottom: 8px;
  width: 168px;
`;

const WatermarkTitle = styled.div`
  display: flex;
  justify-content: space-between;
  font-family: "Noto Sans CJK SC", sans-serif;
  font-size: 40px;
  font-style: italic;
  font-weight: 300;
  line-height: 46px;
  color: #000;
  span:first-child {
    color: #ff6a33;
  }
`;

const WatermarkUrl = styled.div`
  padding-left: 4px;
  font-family: "DejaVu Sans", sans-serif;
  font-size: 15px;
  font-style: italic;
  line-height: 16px;
  color: #999996;
`;

const Flame = styled.svg`
  position: absolute;
  top: -15px;
  left: 66px;
  width: 18px;
  height: 42px;
`;

export default App;
